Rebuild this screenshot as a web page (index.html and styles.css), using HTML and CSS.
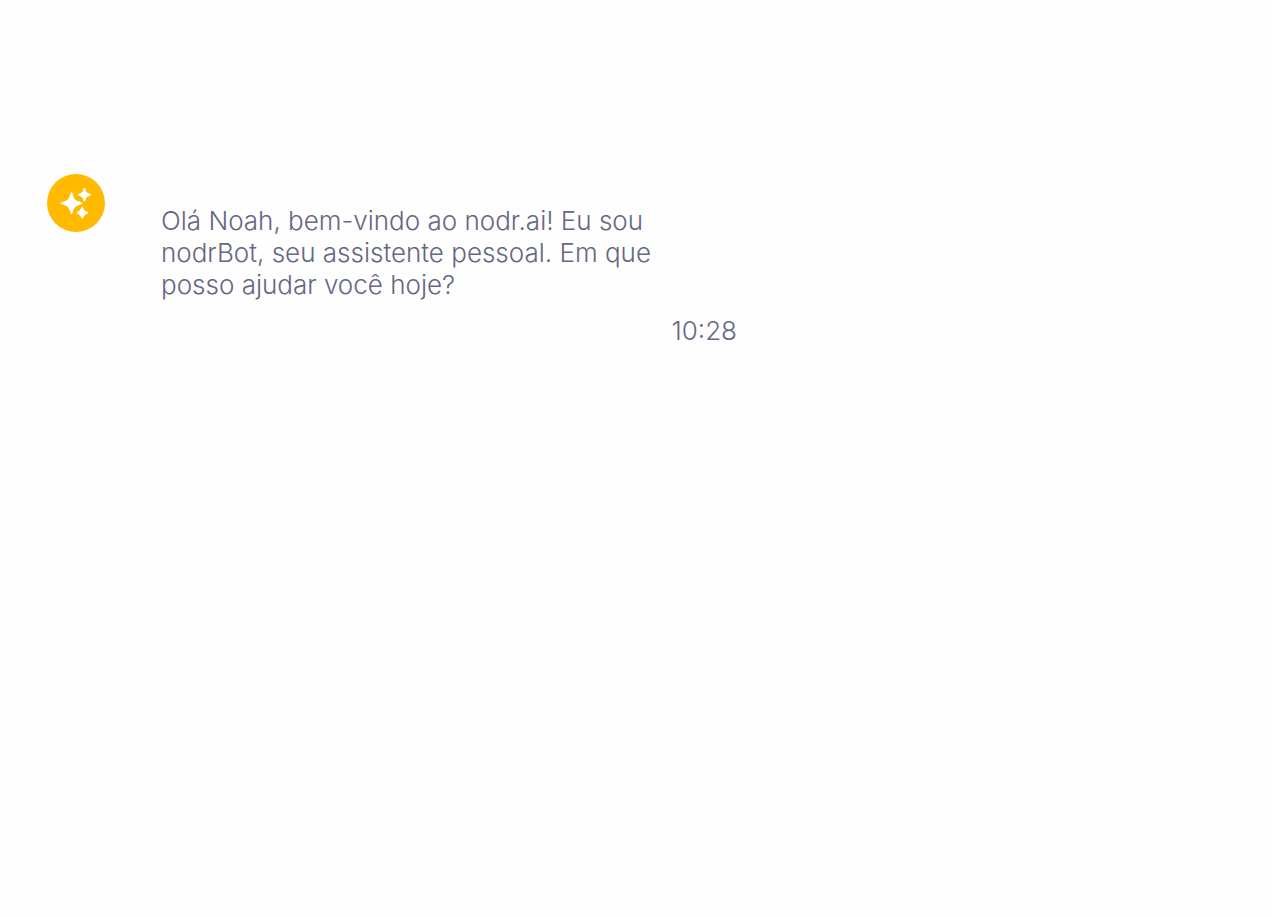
FILE: index.html
```html
<!DOCTYPE html>
<html lang="pt-BR">
<head>
  <meta charset="utf-8">
  <meta name="viewport" content="width=device-width, initial-scale=1">
  <title>nodrBot</title>
  <link rel="stylesheet" href="styles.css">
</head>
<body>
  <main class="chat">
    <article class="message">
      <svg class="avatar" viewBox="0 0 58 58" aria-hidden="true">
        <circle class="avatar-disc" cx="29" cy="29" r="29"/>
        <g class="avatar-stars">
          <path d="M24.500 19.300C25.800 25.500 27 27.500 34.300 29.200C27 31 25.800 33 24.500 39C23.200 33 22 31 14.700 29.200C22 27.500 23.200 25.500 24.500 19.300Z"/>
          <path d="M37.400 15C38.200 18.800 39 19.800 43 20.700C39 21.700 38.200 22.700 37.400 26.400C36.600 22.700 35.800 21.700 31.800 20.700C35.800 19.800 36.600 18.800 37.400 15Z"/>
          <path d="M35.300 34C36 37 36.900 38 40.200 38.800C36.900 39.700 36 40.700 35.300 43.600C34.600 40.700 33.700 39.700 30.700 38.800C33.700 38 34.600 37 35.300 34Z"/>
        </g>
      </svg>
      <div class="content">
        <p class="text">Olá Noah, bem-vindo ao nodr.ai! Eu sou nodrBot, seu assistente pessoal. Em que posso ajudar você hoje?</p>
        <time class="time" datetime="10:28">10:28</time>
      </div>
    </article>
  </main>
</body>
</html>
```
FILE: styles.css
```css
body {
  margin: 0;
  background: #fefefe;
  color: #656783;
  font-family: Inter, "Liberation Sans", sans-serif;
  font-size: 26px;
  font-weight: 300;
  line-height: 32px;
}

.chat {
  padding: 174px 47px 48px;
}

.message {
  display: flex;
  align-items: flex-start;
  gap: 56px;
  max-width: 690px;
}

.avatar {
  flex: none;
  width: 58px;
  height: 58px;
}

.avatar-disc {
  fill: #ffba00;
}

.avatar-stars {
  fill: #ffffff;
  stroke: #ffffff;
  stroke-width: 2;
  stroke-linejoin: round;
}

.content {
  display: flex;
  flex: 1;
  flex-direction: column;
  gap: 14px;
  padding-top: 31px;
}

.text {
  max-width: 512px;
  margin: 0;
}

.time {
  align-self: flex-end;
}
```
